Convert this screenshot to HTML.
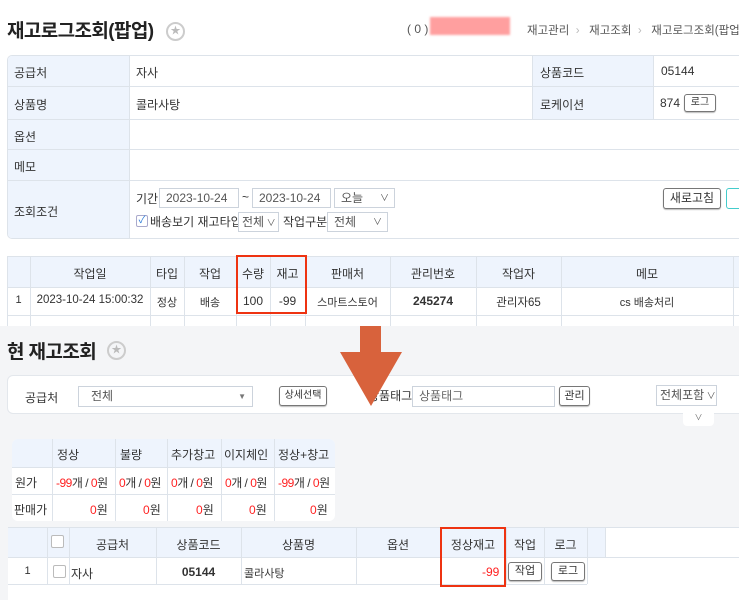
<!DOCTYPE html>
<html><head><meta charset="utf-8">
<style>
*{box-sizing:border-box;margin:0;padding:0}
body{width:739px;height:600px;overflow:hidden;position:relative;background:#fff;font-family:"Liberation Sans","Noto Sans CJK KR",sans-serif;font-size:12px;color:#333}
.a{position:absolute}
.lbl{background:#eef4fd}
.t{position:absolute;white-space:nowrap}
.hl{position:absolute;height:1px;background:#dde3ea}
.vl{position:absolute;width:1px;background:#dde3ea}
.btn{position:absolute;border:1px solid #777;border-radius:3px;background:#fff;font-size:11px;text-align:center;box-shadow:0 1px 1px #bbb}
.inp{position:absolute;border:1px solid #ccd3dc;background:#fff;color:#555;padding-left:6px;font-size:12px}
.r{color:#f22}
.c{text-align:center}
</style></head><body>
<!-- title -->
<div class="t" style="left:7px;top:16px;font-size:19px;font-weight:bold;color:#222;letter-spacing:-0.6px">재고로그조회(팝업)</div>
<div class="a" style="left:166px;top:22px;width:19px;height:19px;border:2px solid #ccc;border-radius:50%;color:#bbb;font-size:10px;text-align:center;line-height:15px">★</div>
<div class="t" style="left:407px;top:22px;color:#555">( 0 )</div>
<div class="a" style="left:430px;top:17px;width:80px;height:18px;background:#f77;opacity:.7;filter:blur(1px)"></div>
<div class="t" style="left:527px;top:22px;color:#555;font-size:11.5px">재고관리 &nbsp;<span style="color:#bbb">›</span>&nbsp;&nbsp; 재고조회 &nbsp;<span style="color:#bbb">›</span>&nbsp;&nbsp; 재고로그조회(팝업)</div>

<!-- top info table -->
<div class="a" style="left:7px;top:55px;width:740px;height:184px;border:1px solid #dde3ea;border-radius:5px;overflow:hidden">
 <div class="a lbl" style="left:0;top:0;width:122px;height:184px"></div>
 <div class="a lbl" style="left:525px;top:0;width:121px;height:63px"></div>
</div>
<div class="hl" style="left:7px;top:86px;width:732px"></div>
<div class="hl" style="left:7px;top:119px;width:732px"></div>
<div class="hl" style="left:7px;top:149px;width:732px"></div>
<div class="hl" style="left:7px;top:180px;width:732px"></div>
<div class="vl" style="left:129px;top:55px;height:184px"></div>
<div class="vl" style="left:532px;top:55px;height:64px"></div>
<div class="vl" style="left:653px;top:55px;height:64px"></div>
<div class="t" style="left:14px;top:64px">공급처</div>
<div class="t" style="left:136px;top:64px">자사</div>
<div class="t" style="left:540px;top:64px">상품코드</div>
<div class="t" style="left:661px;top:64px">05144</div>
<div class="t" style="left:14px;top:96px">상품명</div>
<div class="t" style="left:136px;top:96px">콜라사탕</div>
<div class="t" style="left:540px;top:96px">로케이션</div>
<div class="t" style="left:660px;top:96px">874</div>
<div class="btn" style="left:684px;top:94px;width:32px;height:18px;line-height:16px;font-size:10px">로그</div>
<div class="t" style="left:14px;top:128px">옵션</div>
<div class="t" style="left:14px;top:158px">메모</div>
<div class="t" style="left:14px;top:203px">조회조건</div>
<div class="t" style="left:136px;top:190px">기간</div>
<div class="inp" style="left:159px;top:188px;width:80px;height:20px;line-height:18px">2023-10-24</div>
<div class="t" style="left:242px;top:190px">~</div>
<div class="inp" style="left:252px;top:188px;width:79px;height:20px;line-height:18px">2023-10-24</div>
<div class="inp" style="left:334px;top:188px;width:61px;height:20px;line-height:18px">오늘<span style="position:absolute;right:5px;font-size:9px">∨</span></div>
<div class="a" style="left:136px;top:215px;width:12px;height:12px;border:1px solid #aac;border-radius:2px;color:#2a7ad8;font-size:10px;line-height:10px;text-align:center">✓</div>
<div class="t" style="left:150px;top:213px">배송보기 재고타입</div>
<div class="inp" style="left:238px;top:212px;width:41px;height:20px;line-height:18px;padding-left:3px">전체<span style="font-size:9px"> ∨</span></div>
<div class="t" style="left:283px;top:213px">작업구분</div>
<div class="inp" style="left:327px;top:212px;width:61px;height:20px;line-height:18px">전체<span style="position:absolute;right:5px;font-size:9px">∨</span></div>
<div class="btn" style="left:663px;top:188px;width:58px;height:21px;line-height:19px;font-size:12px">새로고침</div>
<div class="btn" style="left:726px;top:188px;width:20px;height:21px;border-color:#4cc;box-shadow:none"></div>

<!-- log table -->
<div class="a lbl" style="left:7px;top:256px;width:732px;height:31px"></div>
<div class="hl" style="left:7px;top:256px;width:732px"></div>
<div class="hl" style="left:7px;top:287px;width:732px"></div>
<div class="hl" style="left:7px;top:315px;width:732px"></div>
<div class="vl" style="left:7px;top:256px;height:70px"></div>
<div class="vl" style="left:30px;top:256px;height:70px"></div>
<div class="vl" style="left:150px;top:256px;height:70px"></div>
<div class="vl" style="left:184px;top:256px;height:70px"></div>
<div class="vl" style="left:236px;top:256px;height:70px"></div>
<div class="vl" style="left:270px;top:256px;height:70px"></div>
<div class="vl" style="left:305px;top:256px;height:70px"></div>
<div class="vl" style="left:390px;top:256px;height:70px"></div>
<div class="vl" style="left:476px;top:256px;height:70px"></div>
<div class="vl" style="left:561px;top:256px;height:70px"></div>
<div class="vl" style="left:733px;top:256px;height:70px"></div>
<div class="t c" style="left:30px;top:265px;width:120px">작업일</div>
<div class="t c" style="left:150px;top:265px;width:34px">타입</div>
<div class="t c" style="left:184px;top:265px;width:52px">작업</div>
<div class="t c" style="left:236px;top:265px;width:34px">수량</div>
<div class="t c" style="left:270px;top:265px;width:35px">재고</div>
<div class="t c" style="left:305px;top:265px;width:85px">판매처</div>
<div class="t c" style="left:390px;top:265px;width:86px">관리번호</div>
<div class="t c" style="left:476px;top:265px;width:85px">작업자</div>
<div class="t c" style="left:561px;top:265px;width:172px">메모</div>
<div class="t c" style="left:7px;top:294px;width:23px;font-size:11px">1</div>
<div class="t c" style="left:30px;top:294px;width:120px;font-size:11.5px">2023-10-24 15:00:32</div>
<div class="t c" style="left:150px;top:294px;width:34px;font-size:11px">정상</div>
<div class="t c" style="left:184px;top:294px;width:52px;font-size:11px">배송</div>
<div class="t c" style="left:236px;top:294px;width:34px">100</div>
<div class="t c" style="left:270px;top:294px;width:35px">-99</div>
<div class="t c" style="left:305px;top:294px;width:85px;font-size:11px">스마트스토어</div>
<div class="t c" style="left:390px;top:294px;width:86px;font-weight:bold">245274</div>
<div class="t c" style="left:476px;top:294px;width:85px;font-size:11.5px">관리자65</div>
<div class="t c" style="left:561px;top:294px;width:172px;font-size:11px">cs 배송처리</div>
<div class="a" style="left:236px;top:255px;width:71px;height:59px;border:2px solid #e31"></div>

<!-- lower section -->
<div class="a" style="left:0;top:326px;width:739px;height:274px;background:#f4f5f7"></div>
<div class="t" style="left:7px;top:337px;font-size:19px;font-weight:bold;color:#222;letter-spacing:-0.6px">현 재고조회</div>
<div class="a" style="left:107px;top:341px;width:19px;height:19px;border:2px solid #ccc;border-radius:50%;color:#bbb;font-size:10px;text-align:center;line-height:15px">★</div>
<div class="a" style="left:7px;top:375px;width:740px;height:39px;background:#fff;border:1px solid #e3e7ec;border-radius:6px"></div>
<div class="t" style="left:25px;top:389px">공급처</div>
<div class="inp" style="left:78px;top:386px;width:175px;height:21px;line-height:19px;padding-left:12px">전체<span style="position:absolute;right:6px;font-size:8px;color:#777">▼</span></div>
<div class="btn" style="left:279px;top:386px;width:48px;height:20px;line-height:18px;font-size:10px">상세선택</div>
<div class="t" style="left:368px;top:387px">상품태그</div>
<div class="inp" style="left:412px;top:386px;width:143px;height:21px;line-height:19px;color:#666">상품태그</div>
<div class="btn" style="left:559px;top:386px;width:31px;height:20px;line-height:18px">관리</div>
<div class="inp" style="left:656px;top:385px;width:61px;height:21px;line-height:19px;padding-left:3px">전체포함<span style="font-size:9px"> ∨</span></div>
<div class="a" style="left:683px;top:413px;width:31px;height:13px;background:#fff;border-radius:0 0 4px 4px;font-size:8px;text-align:center;color:#666;line-height:10px">∨</div>

<!-- arrow -->
<svg class="a" style="left:340px;top:326px" width="62" height="82"><path d="M16 0H37V26H58L27 80L-4 26H16Z" transform="translate(4,0)" fill="#d8623c"/></svg>

<!-- summary table -->
<div class="a" style="left:12px;top:439px;width:323px;height:82px;background:#fff;border-radius:6px;overflow:hidden">
 <div class="a lbl" style="left:0;top:0;width:323px;height:28px"></div>
</div>
<div class="hl" style="left:12px;top:467px;width:323px"></div>
<div class="hl" style="left:12px;top:494px;width:323px"></div>
<div class="vl" style="left:52px;top:439px;height:82px"></div>
<div class="vl" style="left:115px;top:439px;height:82px"></div>
<div class="vl" style="left:167px;top:439px;height:82px"></div>
<div class="vl" style="left:221px;top:439px;height:82px"></div>
<div class="vl" style="left:274px;top:439px;height:82px"></div>
<div class="t" style="left:57px;top:446px">정상</div>
<div class="t" style="left:120px;top:446px">불량</div>
<div class="t" style="left:171px;top:446px">추가창고</div>
<div class="t" style="left:224px;top:446px">이지체인</div>
<div class="t" style="left:278px;top:446px">정상+창고</div>
<div class="t" style="left:15px;top:474px">원가</div>
<div class="t" style="left:56px;top:474px;letter-spacing:-.5px"><span class="r">-99</span>개 / <span class="r">0</span>원</div>
<div class="t" style="left:119px;top:474px;letter-spacing:-.5px"><span class="r">0</span>개 / <span class="r">0</span>원</div>
<div class="t" style="left:171px;top:474px;letter-spacing:-.5px"><span class="r">0</span>개 / <span class="r">0</span>원</div>
<div class="t" style="left:225px;top:474px;letter-spacing:-.5px"><span class="r">0</span>개 / <span class="r">0</span>원</div>
<div class="t" style="left:278px;top:474px;letter-spacing:-.5px"><span class="r">-99</span>개 / <span class="r">0</span>원</div>
<div class="t" style="left:14px;top:501px">판매가</div>
<div class="t" style="left:90px;top:501px"><span class="r">0</span>원</div>
<div class="t" style="left:143px;top:501px"><span class="r">0</span>원</div>
<div class="t" style="left:196px;top:501px"><span class="r">0</span>원</div>
<div class="t" style="left:249px;top:501px"><span class="r">0</span>원</div>
<div class="t" style="left:310px;top:501px"><span class="r">0</span>원</div>

<!-- bottom table -->
<div class="a" style="left:8px;top:527px;width:731px;height:73px;background:#fff"></div>
<div class="a lbl" style="left:8px;top:527px;width:597px;height:30px"></div>
<div class="hl" style="left:8px;top:527px;width:731px"></div>
<div class="hl" style="left:8px;top:557px;width:731px"></div>
<div class="hl" style="left:8px;top:584px;width:579px"></div>
<div class="vl" style="left:47px;top:527px;height:57px"></div>
<div class="vl" style="left:69px;top:527px;height:57px"></div>
<div class="vl" style="left:156px;top:527px;height:57px"></div>
<div class="vl" style="left:241px;top:527px;height:57px"></div>
<div class="vl" style="left:356px;top:527px;height:57px"></div>
<div class="vl" style="left:440px;top:527px;height:57px"></div>
<div class="vl" style="left:506px;top:527px;height:57px"></div>
<div class="vl" style="left:544px;top:527px;height:57px"></div>
<div class="vl" style="left:587px;top:527px;height:57px"></div>
<div class="vl" style="left:605px;top:527px;height:30px"></div>
<div class="a" style="left:51px;top:535px;width:13px;height:13px;border:1px solid #bbb;border-radius:2px;background:#fff"></div>
<div class="t c" style="left:69px;top:536px;width:87px">공급처</div>
<div class="t c" style="left:156px;top:536px;width:85px">상품코드</div>
<div class="t c" style="left:241px;top:536px;width:115px">상품명</div>
<div class="t c" style="left:356px;top:536px;width:84px">옵션</div>
<div class="t c" style="left:440px;top:536px;width:66px">정상재고</div>
<div class="t c" style="left:506px;top:536px;width:38px">작업</div>
<div class="t c" style="left:544px;top:536px;width:43px">로그</div>
<div class="t c" style="left:8px;top:565px;width:39px;font-size:11px">1</div>
<div class="a" style="left:53px;top:565px;width:13px;height:13px;border:1px solid #bbb;border-radius:2px;background:#fff"></div>
<div class="t" style="left:71px;top:565px">자사</div>
<div class="t c" style="left:156px;top:565px;width:85px;font-weight:bold">05144</div>
<div class="t" style="left:244px;top:565px;font-size:11px">콜라사탕</div>
<div class="t" style="left:482px;top:565px" ><span class="r">-99</span></div>
<div class="btn" style="left:508px;top:562px;width:34px;height:19px;line-height:17px">작업</div>
<div class="btn" style="left:551px;top:562px;width:34px;height:19px;line-height:17px">로그</div>
<div class="a" style="left:440px;top:527px;width:66px;height:60px;border:2px solid #e31"></div>
</body></html>
